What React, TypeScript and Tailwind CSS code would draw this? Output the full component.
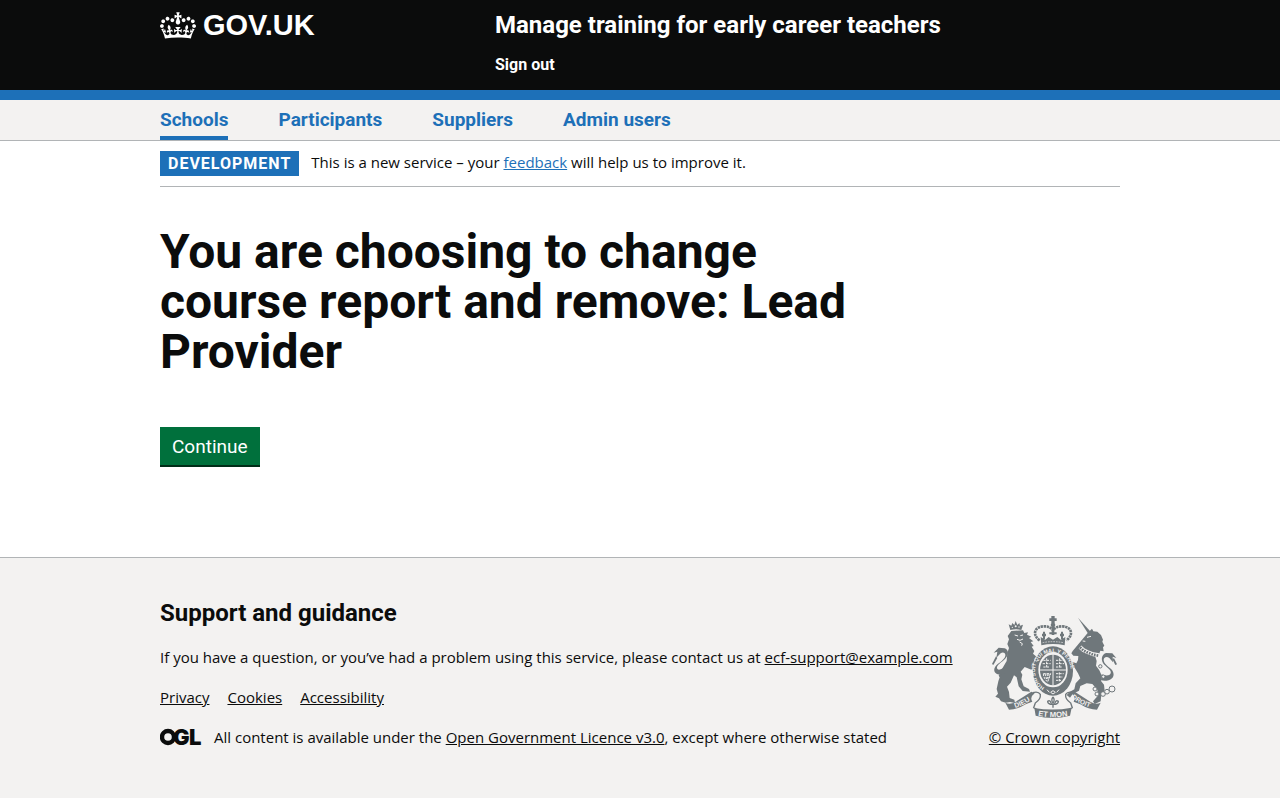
import React from "react";

const CROWN =
  "M25 30.2c3.5 1.5 7.7-.2 9.1-3.7 1.5-3.6-.2-7.8-3.9-9.2-3.6-1.4-7.6.3-9.1 3.9-1.4 3.5.3 7.5 3.9 9zM9 39.5c3.6 1.5 7.8-.2 9.2-3.7 1.5-3.6-.2-7.8-3.9-9.1-3.6-1.5-7.6.2-9.1 3.8-1.4 3.5.3 7.5 3.8 9zM4.4 57.2c3.5 1.5 7.7-.2 9.1-3.8 1.5-3.6-.2-7.7-3.9-9.1-3.5-1.5-7.6.3-9.1 3.8-1.4 3.5.3 7.6 3.9 9.1zm38.3-21.4c3.5 1.5 7.7-.2 9.1-3.8 1.5-3.6-.2-7.7-3.9-9.1-3.6-1.5-7.6.3-9.1 3.8-1.3 3.6.4 7.7 3.9 9.1zm64.4-5.6c-3.6 1.5-7.8-.2-9.1-3.7-1.5-3.6.2-7.8 3.8-9.2 3.6-1.4 7.7.3 9.2 3.9 1.3 3.5-.4 7.5-3.9 9zm15.9 9.3c-3.6 1.5-7.7-.2-9.1-3.7-1.5-3.6.2-7.8 3.7-9.1 3.6-1.5 7.7.2 9.2 3.8 1.5 3.5-.3 7.5-3.8 9zm4.7 17.7c-3.6 1.5-7.8-.2-9.2-3.8-1.5-3.6.2-7.7 3.9-9.1 3.6-1.5 7.7.3 9.2 3.8 1.3 3.5-.4 7.6-3.9 9.1zM89.3 35.8c-3.6 1.5-7.8-.2-9.2-3.8-1.4-3.6.2-7.7 3.9-9.1 3.6-1.5 7.7.3 9.2 3.8 1.4 3.6-.3 7.7-3.9 9.1zM69.7 17.7l8.9 4.7V9.3l-8.9 2.8c-.2-.3-.5-.6-.9-.9L72.4 0H59.6l3.5 11.2c-.3.3-.6.5-.9.9l-8.8-2.8v13.1l8.8-4.7c.3.3.6.7.9.9l-5 15.4v.1c-.2.8-.4 1.6-.4 2.4 0 4.1 3.1 7.5 7 8.1h.2c.3 0 .7.1 1 .1.4 0 .7 0 1-.1h.2c4-.6 7.1-4.1 7.1-8.1 0-.8-.1-1.7-.4-2.4V34l-5.1-15.4c.4-.2.7-.6 1-.9zM66 92.8c16.9 0 32.8 1.1 47.1 3.2 4-16.9 8.9-26.7 14-33.5l-9.6-3.4c1 4.9 1.1 7.2 0 10.2-1.5-1.4-3-4.3-4.2-8.7L108.6 76c2.8-2 5-3.2 7.5-3.3-4.4 9.4-10 11.9-13.6 11.2-4.3-.8-6.3-4.6-5.6-7.9 1-4.7 5.7-5.9 8-.5 4.3-8.7-3-11.4-7.6-8.8 7.1-7.2 7.9-13.5 2.1-21.1-8 6.1-8.1 12.3-4.5 20.8-4.7-5.4-12.1-2.5-9.5 6.2 3.4-5.2 7.9-2 7.2 3.1-.6 4.3-6.4 7.8-13.5 7.2-10.3-.9-10.9-8-11.2-13.8 2.5-.5 7.1 1.8 11 7.3L80.2 60c-4.1 4.4-8 5.3-12.3 5.4 1.4-4.4 8-11.6 8-11.6H55.5s6.4 7.2 7.9 11.6c-4.2-.1-8-1-12.3-5.4l1.4 16.4c3.9-5.5 8.5-7.7 10.9-7.3-.3 5.8-.9 12.8-11.1 13.8-7.2.6-12.9-2.9-13.5-7.2-.7-5 3.8-8.3 7.1-3.1 2.7-8.7-4.6-11.6-9.4-6.2 3.7-8.5 3.6-14.7-4.6-20.8-5.8 7.6-5 13.9 2.2 21.1-4.7-2.6-11.9.1-7.7 8.8 2.3-5.5 7.1-4.2 8.1.5.7 3.3-1.3 7.1-5.7 7.9-3.5.7-9-1.8-13.5-11.2 2.5.1 4.7 1.3 7.5 3.3l-4.7-15.4c-1.2 4.4-2.7 7.2-4.3 8.7-1.1-3-.9-5.3 0-10.2l-9.5 3.4c5 6.9 9.9 16.7 14 33.5 14.8-2.1 30.8-3.2 47.7-3.2z";

function Crest() {
  return (
    <svg
      className="mx-auto block h-[102px] w-[125px]"
      viewBox="36 33 375 306"
      fill="#6f777b"
      aria-hidden="true"
    >
      {/* royal crown */}
      <path d="M214 33h10v7h6v8h-6v7h-10v-7h-6v-8h6z" />
      <circle cx="219" cy="60" r="7" />
      <path
        d="M179 106C158 92 160 66 190 64c14-1 25 5 29 12 4-7 15-13 29-12 30 2 32 28 11 42"
        fill="none"
        stroke="#6f777b"
        strokeWidth="8"
        strokeDasharray="7 2"
      />
      <path d="M215 66h8v24h-8zM208 82h22v6h-22zM186 86h12v8h-12zM189 80h6v22h-6zM240 86h12v8h-12zM243 80h6v22h-6z" />
      <path d="M182 96l14 8 10-8 13 8 13-8 10 8 14-8-2 25q-35-8-70 0z" />
      <path d="M188 113q31-6 62 0" stroke="#f3f2f1" strokeWidth="2" fill="none" strokeDasharray="5 3" />

      {/* lion */}
      <path d="M91 75l-5-17 8 4 3-8 6 6 4-12 5 12 6-6 2 8 9-3-5 16q-17-5-33 0z" />
      <g fill="#f3f2f1">
        <circle cx="97" cy="67" r="2" />
        <circle cx="107" cy="64" r="3" />
        <circle cx="117" cy="66" r="2" />
      </g>
      <path d="M94 78l35-2 4 8 11-2-3 7 13 6-7 4 13 10-8 2 9 12-6 2 8 13-4 8 8 7 8 11-4 9-8-6 1 16 14 19-2 8 9 5-1 12-12-8-16-24-22-9-12 14 5 9-3 14 7 21 16 8 3 8-22-2-12-14-6-27-8-6-10 22-11 12 6 16 2 18 14 5 2 10-15-3-13 2-14-4-6-9-11-5 8-9-4-14 5-23 4-12-3-5 10-20 14-24 2-24 5-15-5-12 5-14-4-10z" />
      <path d="M78 205c-19 7-38 3-35-14 3-15 30-23 33-39 1-8-7-12-14-7l-13 13 3-18-11 3 15-15 18 2c14 5 12 22 1 32-10 10-26 18-24 28 3 9 18 1 27-6z" />
      <path d="M36 177l12-23 4 5-12 21z" />
      <path d="M104 90l10 3M121 92l8-2M111 103l9 3 9-4M119 111l8 5-2 6" stroke="#f3f2f1" strokeWidth="3" fill="none" />

      {/* unicorn */}
      <path d="M294 38l38 42-7 7z" />
      <path d="M323 84l13-13 4 8 12 1 11 10 6 14-2 6 6 12-4 5 2 12-10-2-4 11-12 4 5 16-2 14 10 14 8 18-3 14 9 11 2 18-10 12-2 20-18 8-5-8 14-16-1-19-15-17-17-2-19 8-4 14-19 10-8 11-10-8 10-10 13-7 4-18 14-15-7-15-10-17-14 2-9 12-12-4 11-13-16-1-3-14 13 5 22-5 13 5 5-10 1-12-15-1-6-7 4-7z" />
      <path d="M300 126l10 9 12 6 18 7 17 3" stroke="#f3f2f1" strokeWidth="12" fill="none" />
      <path d="M300 127l10 9 12 6 18 7 15 3" stroke="#6f777b" strokeWidth="8" fill="none" strokeDasharray="5 3" />
      <path d="M321 97l12-3M308 108l8 1" stroke="#f3f2f1" strokeWidth="3" fill="none" />
      <path d="M363 226c23 5 42-6 37-23-4-15-27-20-29-37-1-8 8-13 17-7l11 13-1-17 11 4-12-14-19-1c-15 5-16 24-5 35 9 9 22 16 19 26-3 9-18 7-27 3z" />
      <path d="M402 160l9 18-5 2-9-18z" />
      <g fill="#f3f2f1" stroke="#6f777b" strokeWidth="3">
        <circle cx="345" cy="252" r="6" />
        <circle cx="351" cy="267" r="6" />
        <circle cx="369" cy="267" r="7" />
        <circle cx="381" cy="260" r="7" />
        <circle cx="396" cy="252" r="9" />
        <circle cx="361" cy="184" r="5" />
        <circle cx="370" cy="215" r="5" />
      </g>

      {/* garter and shield */}
      <ellipse cx="219" cy="198" rx="62" ry="76" fill="#f3f2f1" />
      <ellipse cx="219" cy="198" rx="60" ry="74" />
      <ellipse cx="219" cy="194" rx="44" ry="53" fill="#f3f2f1" />
      <path id="garter" d="M194 247C150 225 155 144 219 142C283 144 288 225 244 247" fill="none" />
      <text fill="#f3f2f1" className="font-['Liberation_Sans'] text-[16px] font-bold">
        <textPath href="#garter">HONI SOIT QUI MAL Y PENSE</textPath>
      </text>
      <ellipse cx="219" cy="195" rx="39" ry="46" />
      <path d="M219 146v96M178 195h82" stroke="#f3f2f1" strokeWidth="3" />
      <path
        d="M190 166h22M188 176h24M190 186h20M200 160v28M228 166h22M228 176h24M228 186h20M239 160v28M228 206h23M228 216h21M228 226h15M238 202v28M190 206h22l-9 25q-12-10-13-25zM195 206l6 20M201 206l3 17M207 206v14"
        stroke="#f3f2f1"
        strokeWidth="3"
        strokeDasharray="7 3"
        fill="none"
      />
      <path d="M201 254l7 8M237 254l-7 8M212 262l7-5 7 5-7 5z" stroke="#f3f2f1" strokeWidth="3" />

      {/* motto ribbon */}
      <path d="M76 293q14 7 30-2 21-14 48-31l10 5q-16 12-7 25l-20 8q-25 16-50 16z" />
      <path d="M362 293q-14 7-30-2-21-14-48-31l-10 5q16 12 7 25l20 8q25 16 50 16z" />
      <path d="M158 263q17-5 23 5 2 14-15 26l-5 14 8 4M280 263q-17-5-23 5-2 14 15 26l5 14-8 4" fill="none" stroke="#6f777b" strokeWidth="4" />
      <path d="M163 309q56 10 112-1l-5 24q-52 14-103 0z" />
      <path id="dieu" d="M106 309q27-9 56-29" fill="none" />
      <path id="droit" d="M274 278q27 22 68 33" fill="none" />
      <path id="etmon" d="M174 332q45 9 94 0" fill="none" />
      <g fill="#f3f2f1" className="font-['Liberation_Sans'] font-bold">
        <text className="text-[21px]">
          <textPath href="#dieu">DIEU</textPath>
        </text>
        <text className="text-[20px]">
          <textPath href="#droit">DROIT</textPath>
        </text>
        <text className="text-[23px]">
          <textPath href="#etmon">ET MON</textPath>
        </text>
      </g>
      <path
        d="M219 276q-7 9 0 18 7-9 0-18M214 297q-3-14-11-8 0 7 7 8M224 297q3-14 11-8 0 7-7 8M209 298h20M219 294v14"
        fill="none"
        stroke="#6f777b"
        strokeWidth="4"
      />
    </svg>
  );
}

const navItems = ["Schools", "Participants", "Suppliers", "Admin users"];
const footerLinks = ["Privacy", "Cookies", "Accessibility"];

export default function App() {
  return (
    <div className="flex min-h-screen flex-col bg-[#f3f2f1] font-['Roboto',sans-serif] text-base leading-5 text-[#0b0c0c]">
      <header className="border-b-10 border-[#1d70b8] bg-[#0b0c0c] text-white">
        <div className="mx-auto flex max-w-[960px] items-start pb-[15px]">
          <div className="w-[335px] pt-[10px]">
            <a href="#" className="flex items-center gap-[7px]">
              <svg className="h-[27px] w-9" viewBox="0 0 132 97" fill="currentColor" aria-hidden="true">
                <path d={CROWN} />
              </svg>
              <span className="font-['Liberation_Sans',sans-serif] text-[29px] leading-[30px] font-bold">GOV.UK</span>
            </a>
          </div>
          <div className="flex flex-col items-start pt-[10px]">
            <a href="#" className="text-2xl leading-[30px] font-bold">
              Manage training for early career teachers
            </a>
            <a href="#" className="mt-[15px] font-bold">
              Sign out
            </a>
          </div>
        </div>
      </header>

      <nav className="border-b border-[#b1b4b6]" aria-label="Primary">
        <ul className="mx-auto flex max-w-[960px] gap-[50px] text-[19px] font-bold text-[#1d70b8]">
          {navItems.map((item, i) => (
            <li key={item}>
              <a
                href="#"
                className={
                  i === 0
                    ? "block border-b-4 border-[#1d70b8] pt-[6px] pb-[2px] leading-7"
                    : "block border-b-4 border-transparent pt-[6px] pb-[2px] leading-7"
                }
              >
                {item}
              </a>
            </li>
          ))}
        </ul>
      </nav>

      <div className="bg-white pb-[90px]">
        <div className="mx-auto max-w-[960px]">
          <div className="flex items-center gap-3 border-b border-[#b1b4b6] py-[10px]">
            <strong className="bg-[#1d70b8] px-2 leading-[25px] font-bold tracking-[1px] text-white">DEVELOPMENT</strong>
            <p className="pb-[3px] font-['Open_Sans',sans-serif] text-[15px]">
              This is a new service – your{" "}
              <a href="#" className="text-[#1d70b8] underline">
                feedback
              </a>{" "}
              will help us to improve it.
            </p>
          </div>
          <main className="pt-10">
            <h1 className="max-w-[712px] text-[48px] leading-[50px] font-bold">
              You are choosing to change course report and remove: Lead Provider
            </h1>
            <button
              type="button"
              className="mt-[50px] block border-b-2 border-[#002d18] bg-[#00703c] px-3 pt-[2px] text-[19px] leading-9 text-white"
            >
              Continue
            </button>
          </main>
        </div>
      </div>

      <footer className="grow border-t border-[#b1b4b6] pt-10 pb-[50px] font-['Open_Sans',sans-serif] text-[15px]">
        <div className="mx-auto flex max-w-[960px] items-end justify-between">
          <div>
            <h2 className="font-['Roboto',sans-serif] text-2xl leading-[30px] font-bold">Support and guidance</h2>
            <p className="mt-[19px]">
              If you have a question, or you’ve had a problem using this service, please contact us at{" "}
              <a href="#" className="underline">
                ecf-support@example.com
              </a>
            </p>
            <ul className="mt-5 flex gap-[18px]">
              {footerLinks.map((link) => (
                <li key={link}>
                  <a href="#" className="underline">
                    {link}
                  </a>
                </li>
              ))}
            </ul>
            <div className="mt-5 flex h-5 items-center gap-[10px]">
              <svg
                className="h-[32px] w-[44px] font-['Inter']"
                viewBox="0 -7 44 32"
                fill="#0b0c0c"
                role="img"
                aria-label="OGL"
              >
                <circle cx="8" cy="9" r="6" fill="none" stroke="#0b0c0c" strokeWidth="4.4" />
                <text x="13" y="17" className="text-[22px] font-black">
                  G
                </text>
                <text x="29" y="17" className="text-[22px] font-black">
                  L
                </text>
              </svg>
              <p>
                All content is available under the{" "}
                <a href="#" className="underline">
                  Open Government Licence v3.0
                </a>
                , except where otherwise stated
              </p>
            </div>
          </div>
          <a href="#" className="text-center underline">
            <Crest />
            <span className="mt-[9px] block">© Crown copyright</span>
          </a>
        </div>
      </footer>
    </div>
  );
}
